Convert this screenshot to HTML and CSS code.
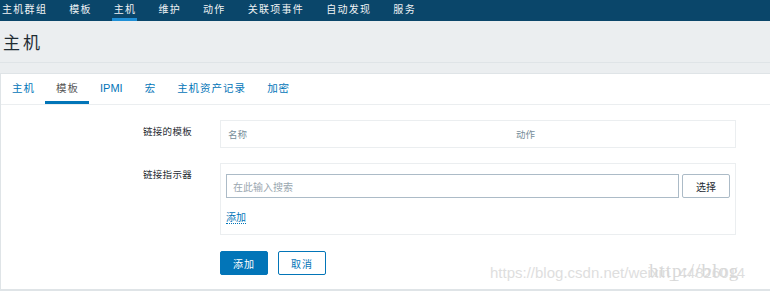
FILE: index.html
```html
<!DOCTYPE html>
<html lang="zh">
<head>
    <meta charset="UTF-8">
    <title>主机</title>
    <link rel="stylesheet" href="styles.css">
</head>
<body>
    <nav class="top-nav">
        <a href="#" class="nav-item">主机群组</a>
        <a href="#" class="nav-item">模板</a>
        <a href="#" class="nav-item active">主机</a>
        <a href="#" class="nav-item">维护</a>
        <a href="#" class="nav-item">动作</a>
        <a href="#" class="nav-item">关联项事件</a>
        <a href="#" class="nav-item">自动发现</a>
        <a href="#" class="nav-item">服务</a>
    </nav>

    <header class="page-header">
        <h1 class="page-title">主机</h1>
    </header>

    <section class="panel">
        <ul class="tabs">
            <li class="tab">主机</li>
            <li class="tab active">模板</li>
            <li class="tab latin">IPMI</li>
            <li class="tab">宏</li>
            <li class="tab">主机资产记录</li>
            <li class="tab">加密</li>
        </ul>

        <div class="form-grid">
            <div class="form-label">链接的模板</div>
            <div class="form-box table-box">
                <span class="col-name">名称</span>
                <span class="col-action">动作</span>
            </div>

            <div class="form-label">链接指示器</div>
            <div class="form-box link-box">
                <div class="search-row">
                    <input class="search-input" type="text" placeholder="在此输入搜索">
                    <button class="btn-grey">选择</button>
                </div>
                <a href="#" class="link-add">添加</a>
            </div>

            <div></div>
            <div class="form-actions">
                <button class="btn-main">添加</button>
                <button class="btn-outline">取消</button>
            </div>
        </div>

        <div class="watermark">https://blog.csdn.net/weixin_44826014</div>
        <div class="watermark-serif">http://blog</div>
    </section>
</body>
</html>
```

FILE: styles.css
```css
body, html {
    margin: 0;
    padding: 0;
    background: #ebeef0;
    font-family: "Noto Sans CJK SC", "Liberation Sans", sans-serif;
    color: #1f2c33;
    height: 291px;
    overflow: hidden;
}

.top-nav {
    display: flex;
    height: 21px;
    background: #0a466a;
}

.nav-item {
    display: block;
    padding: 0 1px 0 2px;
    margin-right: 19px;
    color: #f0f3f5;
    text-decoration: none;
    font-size: 10px;
    letter-spacing: 1.3px;
    line-height: 18px;
    border-bottom: 3px solid transparent;
}

.nav-item.active {
    border-bottom-color: #1f8fd6;
}

.page-header {
    height: 41px;
    border-bottom: 1px solid #dfe4e7;
    display: flex;
    align-items: center;
}

.page-title {
    margin: 0 0 0 3px;
    font-size: 17px;
    font-weight: normal;
    letter-spacing: 3px;
    color: #1f2c33;
}

.panel {
    position: relative;
    margin-top: 10px;
    background: #fff;
    border-left: 1px solid #dfe4e7;
    border-top: 1px solid #dfe4e7;
    border-bottom: 2px solid #dfe4e7;
    height: 218px;
    box-sizing: border-box;
}

.tabs {
    display: flex;
    list-style: none;
    margin: 0;
    padding: 0;
    height: 30px;
    border-bottom: 1px solid #ebeef0;
}

.tab {
    padding: 0 10px 0 11px;
    font-size: 10.5px;
    letter-spacing: 1px;
    line-height: 28px;
    color: #0275b8;
    border-bottom: 3px solid transparent;
}

.tab.latin {
    padding-right: 11px;
    font-family: "Liberation Sans", sans-serif;
    font-size: 11px;
    letter-spacing: 0;
}

.tab.active {
    color: #555;
    border-bottom-color: #0275b8;
}

.form-grid {
    display: grid;
    grid-template-columns: 191px 516px;
    column-gap: 28px;
    row-gap: 15px;
    padding-top: 15px;
}

.form-label {
    text-align: right;
    font-size: 9.5px;
    letter-spacing: 0.3px;
    padding-top: 4px;
    color: #1f2c33;
}

.form-box {
    border: 1px solid #ebeef0;
    box-sizing: border-box;
}

.table-box {
    display: flex;
    height: 28px;
    align-items: center;
    font-size: 9.5px;
    color: #768d99;
}

.col-name {
    padding-left: 7px;
    width: 288px;
}

.link-box {
    height: 72px;
    padding: 10px 5px 0 5px;
}

.search-row {
    display: flex;
    gap: 3px;
}

.search-input {
    width: 453px;
    height: 24px;
    box-sizing: border-box;
    border: 1px solid #acbbc7;
    padding: 0 6px;
    font-family: inherit;
    font-size: 10px;
    color: #1f2c33;
}

.search-input::placeholder {
    color: #9aa7b0;
}

.btn-grey {
    width: 48px;
    height: 24px;
    background: #fff;
    border: 1px solid #acbbc7;
    border-radius: 2px;
    font-family: inherit;
    font-size: 10px;
    color: #1f2c33;
}

.link-add {
    display: inline-block;
    margin-top: 12px;
    font-size: 10px;
    color: #0275b8;
    text-decoration: none;
    border-bottom: 1px dotted #0275b8;
    line-height: 13px;
}

.form-actions {
    display: flex;
    gap: 10px;
    padding-top: 1px;
}

.btn-main, .btn-outline {
    width: 48px;
    height: 24px;
    border-radius: 2px;
    font-family: inherit;
    font-size: 10px;
    letter-spacing: 1px;
}

.btn-main {
    background: #0275b8;
    border: 1px solid #0275b8;
    color: #fff;
}

.btn-outline {
    background: #fff;
    border: 1px solid #0275b8;
    color: #0275b8;
}

.watermark {
    position: absolute;
    left: 489px;
    top: 190px;
    font-family: "Liberation Sans", sans-serif;
    font-size: 15px;
    color: #dedede;
    white-space: nowrap;
}

.watermark-serif {
    position: absolute;
    left: 648px;
    top: 186px;
    font-family: "Liberation Serif", serif;
    font-size: 19px;
    letter-spacing: 1px;
    color: #d8d8d8;
    white-space: nowrap;
}
```
